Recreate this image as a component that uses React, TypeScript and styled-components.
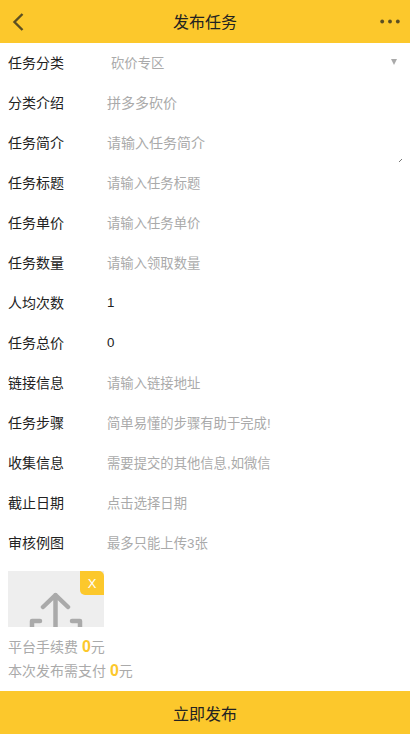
import React from 'react';
import styled, { createGlobalStyle } from 'styled-components';

const GlobalStyle = createGlobalStyle`
  html, body {
    margin: 0;
    padding: 0;
    background: #fff;
    font-family: "Liberation Sans", "Noto Sans CJK SC", sans-serif;
  }
`;

const Page = styled.div`
  width: 410px;
  height: 734px;
  display: flex;
  flex-direction: column;
  overflow: hidden;
`;

const Header = styled.div`
  height: 43px;
  background: #fcc82c;
  display: grid;
  grid-template-columns: 1fr auto 1fr;
  align-items: center;
  padding: 0 10px;
  font-size: 16px;
`;

const HeaderTitle = styled.div`
  color: #222;
  margin-top: -2px;
`;

const HeaderAction = styled.div<{ $end?: boolean }>`
  display: flex;
  justify-content: ${(props) => (props.$end ? 'flex-end' : 'flex-start')};
  padding-left: ${(props) => (props.$end ? '0' : '2px')};
`;

const Form = styled.div`
  display: flex;
  flex-direction: column;
`;

const Row = styled.div`
  height: 40px;
  display: flex;
  align-items: center;
  padding: 0 0 2px 8px;
  box-sizing: border-box;
  position: relative;
`;

const Label = styled.div`
  width: 99px;
  font-size: 14px;
  color: #222;
  flex-shrink: 0;
`;

const Value = styled.div<{ $filled?: boolean; $large?: boolean }>`
  font-size: ${(props) => (props.$large ? '14px' : '13.33px')};
  color: ${(props) => (props.$filled ? '#222' : '#aaa')};
  padding-top: ${(props) => (props.$large ? '0' : '1px')};
`;

const SelectValue = styled.div`
  font-size: 13.33px;
  color: #aaa;
  padding: 1px 0 0 4px;
`;

const SelectArrow = styled.div`
  margin-left: auto;
  margin-right: 13px;
  width: 0;
  height: 0;
  border-left: 3.5px solid transparent;
  border-right: 3.5px solid transparent;
  border-top: 6px solid #aaa;
`;

const ResizeGrip = styled.svg`
  position: absolute;
  right: 8px;
  bottom: 1px;
`;

const Upload = styled.div`
  position: relative;
  width: 96px;
  height: 56px;
  margin: 8px 0 0 8px;
  background: #eeeeee;
  overflow: hidden;
`;

const RemoveBadge = styled.div`
  position: absolute;
  top: 0;
  right: 0;
  width: 24px;
  height: 24px;
  background: #fcc82c;
  border-radius: 0 5px 0 5px;
  color: #fff;
  font-size: 13px;
  display: flex;
  align-items: center;
  justify-content: center;
`;

const Fees = styled.div`
  display: flex;
  flex-direction: column;
  padding: 8px 0 0 8px;
`;

const FeeLine = styled.div`
  height: 24px;
  line-height: 24px;
  font-size: 14px;
  color: #aaa;
`;

const FeeAmount = styled.span`
  color: #fcc82c;
  font-size: 16px;
  font-weight: bold;
`;

const Submit = styled.div`
  margin-top: auto;
  height: 43px;
  background: #fcc82c;
  color: #222;
  font-size: 16px;
  display: flex;
  align-items: center;
  justify-content: center;
`;

const rows = [
  { label: '分类介绍', value: '拼多多砍价', large: true },
  { label: '任务简介', value: '请输入任务简介', large: true, grip: true },
  { label: '任务标题', value: '请输入任务标题' },
  { label: '任务单价', value: '请输入任务单价' },
  { label: '任务数量', value: '请输入领取数量' },
  { label: '人均次数', value: '1', filled: true },
  { label: '任务总价', value: '0', filled: true },
  { label: '链接信息', value: '请输入链接地址' },
  { label: '任务步骤', value: '简单易懂的步骤有助于完成!' },
  { label: '收集信息', value: '需要提交的其他信息,如微信' },
  { label: '截止日期', value: '点击选择日期' },
  { label: '审核例图', value: '最多只能上传3张' },
];

export default function App() {
  return (
    <Page>
      <GlobalStyle />
      <Header>
        <HeaderAction>
          <svg width="14" height="20" viewBox="0 0 14 20">
            <path d="M10.5 2L2.5 10l8 8" fill="none" stroke="#5c4f22" strokeWidth="2.4" />
          </svg>
        </HeaderAction>
        <HeaderTitle>发布任务</HeaderTitle>
        <HeaderAction $end>
          <svg width="20" height="5" viewBox="0 0 20 5">
            <circle cx="2.2" cy="2.5" r="1.9" fill="#5c4f22" />
            <circle cx="10" cy="2.5" r="1.9" fill="#5c4f22" />
            <circle cx="17.8" cy="2.5" r="1.9" fill="#5c4f22" />
          </svg>
        </HeaderAction>
      </Header>
      <Form>
        <Row>
          <Label>任务分类</Label>
          <SelectValue>砍价专区</SelectValue>
          <SelectArrow />
        </Row>
        {rows.map((row) => (
          <Row key={row.label}>
            <Label>{row.label}</Label>
            <Value $filled={row.filled} $large={row.large}>
              {row.value}
            </Value>
            {row.grip && (
              <ResizeGrip width="3" height="3" viewBox="0 0 3 3">
                <path d="M0 3L3 0" stroke="#777" strokeWidth="1" />
              </ResizeGrip>
            )}
          </Row>
        ))}
      </Form>
      <Upload>
        <svg width="96" height="80" viewBox="0 0 96 80">
          <path
            d="M47.5 24V62M35 36L47.5 24L60 36M32 50H24V62M64 50H72V62"
            fill="none"
            stroke="#aaa"
            strokeWidth="4.5"
            strokeLinecap="round"
            strokeLinejoin="round"
          />
        </svg>
        <RemoveBadge>X</RemoveBadge>
      </Upload>
      <Fees>
        <FeeLine>
          平台手续费 <FeeAmount>0</FeeAmount>元
        </FeeLine>
        <FeeLine>
          本次发布需支付 <FeeAmount>0</FeeAmount>元
        </FeeLine>
      </Fees>
      <Submit>立即发布</Submit>
    </Page>
  );
}
